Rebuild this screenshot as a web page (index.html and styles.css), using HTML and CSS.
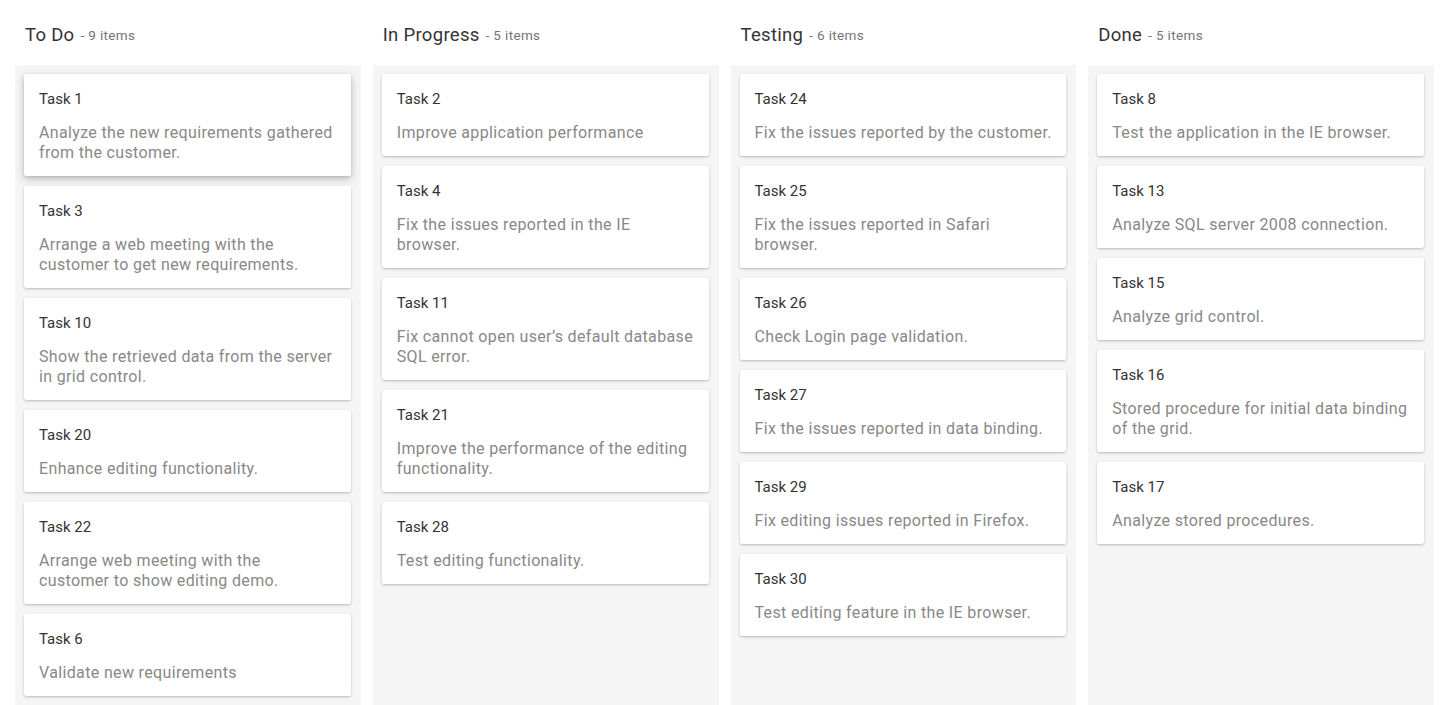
FILE: index.html
```html
<!DOCTYPE html>
<html>
<head>
<meta charset="utf-8">
<link rel="stylesheet" href="styles.css">
</head>
<body>
<div class="board">
  <div class="headers">
    <div class="col-head"><span class="col-title">To Do</span><span class="col-count">- 9 items</span></div>
    <div class="col-head"><span class="col-title">In Progress</span><span class="col-count">- 5 items</span></div>
    <div class="col-head"><span class="col-title">Testing</span><span class="col-count">- 6 items</span></div>
    <div class="col-head"><span class="col-title">Done</span><span class="col-count">- 5 items</span></div>
  </div>
  <div class="columns">
    <div class="column">
      <div class="card active"><div class="card-title">Task 1</div><div class="card-text">Analyze the new requirements gathered from the customer.</div></div>
      <div class="card"><div class="card-title">Task 3</div><div class="card-text">Arrange a web meeting with the customer to get new requirements.</div></div>
      <div class="card"><div class="card-title">Task 10</div><div class="card-text">Show the retrieved data from the server in grid control.</div></div>
      <div class="card"><div class="card-title">Task 20</div><div class="card-text">Enhance editing functionality.</div></div>
      <div class="card"><div class="card-title">Task 22</div><div class="card-text">Arrange web meeting with the<br>customer to show editing demo.</div></div>
      <div class="card"><div class="card-title">Task 6</div><div class="card-text">Validate new requirements</div></div>
    </div>
    <div class="column">
      <div class="card"><div class="card-title">Task 2</div><div class="card-text">Improve application performance</div></div>
      <div class="card"><div class="card-title">Task 4</div><div class="card-text">Fix the issues reported in the IE browser.</div></div>
      <div class="card"><div class="card-title">Task 11</div><div class="card-text">Fix cannot open user’s default database SQL error.</div></div>
      <div class="card"><div class="card-title">Task 21</div><div class="card-text">Improve the performance of the editing functionality.</div></div>
      <div class="card"><div class="card-title">Task 28</div><div class="card-text">Test editing functionality.</div></div>
    </div>
    <div class="column">
      <div class="card"><div class="card-title">Task 24</div><div class="card-text">Fix the issues reported by the customer.</div></div>
      <div class="card"><div class="card-title">Task 25</div><div class="card-text">Fix the issues reported in Safari browser.</div></div>
      <div class="card"><div class="card-title">Task 26</div><div class="card-text">Check Login page validation.</div></div>
      <div class="card"><div class="card-title">Task 27</div><div class="card-text">Fix the issues reported in data binding.</div></div>
      <div class="card"><div class="card-title">Task 29</div><div class="card-text">Fix editing issues reported in Firefox.</div></div>
      <div class="card"><div class="card-title">Task 30</div><div class="card-text">Test editing feature in the IE browser.</div></div>
    </div>
    <div class="column">
      <div class="card"><div class="card-title">Task 8</div><div class="card-text">Test the application in the IE browser.</div></div>
      <div class="card"><div class="card-title">Task 13</div><div class="card-text">Analyze SQL server 2008 connection.</div></div>
      <div class="card"><div class="card-title">Task 15</div><div class="card-text">Analyze grid control.</div></div>
      <div class="card"><div class="card-title">Task 16</div><div class="card-text">Stored procedure for initial data binding of the grid.</div></div>
      <div class="card"><div class="card-title">Task 17</div><div class="card-text">Analyze stored procedures.</div></div>
    </div>
  </div>
</div>
</body>
</html>
```
FILE: styles.css
```css
html, body {
  margin: 0;
  padding: 0;
  background: #ffffff;
  font-family: Roboto, "Liberation Sans", sans-serif;
  overflow: hidden;
}
.board {
  padding: 0 18px 0 15px;
}
.headers, .columns {
  display: flex;
  gap: 12px;
}
.col-head {
  flex: 1 1 0;
  height: 65px;
  display: flex;
  align-items: center;
  padding-left: 10px;
  padding-top: 4px;
  box-sizing: border-box;
}
.col-title {
  font-size: 18.5px;
  color: #333333;
  letter-spacing: 0.3px;
  margin-right: 6px;
}
.col-count {
  font-size: 13.5px;
  color: #757575;
  letter-spacing: 0.35px;
  margin-top: 1px;
}
.column {
  flex: 1 1 0;
  background: #f5f5f5;
  padding: 9px 10px 0 9px;
  height: 660px;
  display: flex;
  flex-direction: column;
  gap: 10px;
}
.card {
  background: #fff;
  border-radius: 2px;
  box-shadow: 0 1px 3px rgba(0,0,0,0.2), 0 1px 1px rgba(0,0,0,0.06);
  padding: 14px 12px 13px 15px;
}
.card.active {
  box-shadow: 0 3px 8px rgba(0,0,0,0.22), 0 1px 3px rgba(0,0,0,0.12);
}
.card-title {
  font-size: 15px;
  line-height: 22px;
  color: #333333;
  margin-bottom: 13px;
}
.card-text {
  font-size: 16px;
  line-height: 20px;
  color: #888888;
  letter-spacing: 0.35px;
}
```
